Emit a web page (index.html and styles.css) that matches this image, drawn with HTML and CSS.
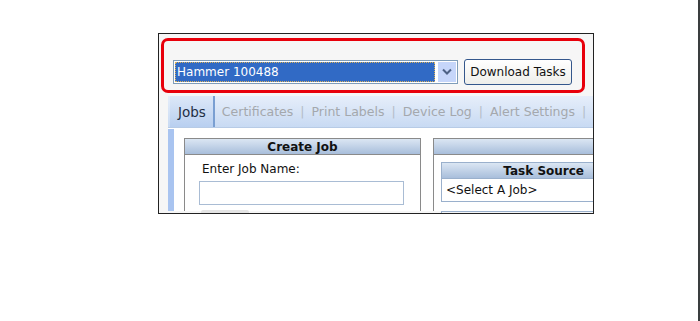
FILE: index.html
```html
<!DOCTYPE html>
<html lang="en">
<head>
    <meta charset="UTF-8">
    <title>Download Tasks</title>
    <link rel="stylesheet" href="styles.css">
</head>
<body>
    <div class="page">
        <div class="shot">
            <div class="top">
                <div class="highlight">
                    <div class="select">
                        <span class="select-value">Hammer 100488</span>
                        <span class="select-arrow">
                            <svg width="10" height="7" viewBox="0 0 10 7"><path d="M1 1.5 L5 5.5 L9 1.5" fill="none" stroke="#4d6185" stroke-width="2"/></svg>
                        </span>
                    </div>
                    <button class="btn">Download Tasks</button>
                </div>
            </div>

            <div class="tabframe">
                <nav class="tabs">
                    <span class="tab active">Jobs</span>
                    <span class="tab">Certificates</span>
                    <span class="sep">|</span>
                    <span class="tab">Print Labels</span>
                    <span class="sep">|</span>
                    <span class="tab">Device Log</span>
                    <span class="sep">|</span>
                    <span class="tab">Alert Settings</span>
                    <span class="sep">|</span>
                </nav>
                <div class="tabbody">
                    <div class="panel create">
                        <div class="panel-head">Create Job</div>
                        <div class="panel-body">
                            <div class="label">Enter Job Name:</div>
                            <div class="input"></div>
                            <div class="small-btn"></div>
                        </div>
                    </div>
                    <div class="panel tasks">
                        <div class="panel-head"></div>
                        <div class="panel-body">
                            <div class="source">
                                <div class="panel-head source-head">Task Source</div>
                                <div class="source-row">&lt;Select A Job&gt;</div>
                            </div>
                            <div class="source-next"></div>
                        </div>
                    </div>
                </div>
            </div>
        </div>
    </div>
</body>
</html>
```

FILE: styles.css
```css
body, html {
    margin: 0;
    padding: 0;
    background: #ffffff;
    font-family: "DejaVu Sans", Verdana, sans-serif;
}

.page {
    box-sizing: border-box;
    width: 700px;
    height: 321px;
    border-right: 2px solid #3a3d3f;
    padding: 33px 0 0 158px;
}

.shot {
    box-sizing: border-box;
    width: 436px;
    height: 181px;
    border: 1px solid #222;
    background: #f6f6f6;
    overflow: hidden;
}

.top {
    padding: 4px 0 0 2px;
    height: 58px;
}

.highlight {
    box-sizing: border-box;
    width: 424px;
    height: 55px;
    border: 3px solid #e8000b;
    border-radius: 7px;
    display: flex;
    align-items: center;
    gap: 6px;
    padding: 12px 0 0 9px;
}

.select {
    box-sizing: border-box;
    width: 285px;
    height: 24px;
    border: 1px solid #7f9db9;
    background: #fff;
    display: flex;
    align-items: center;
    padding: 1px;
    gap: 3px;
}

.select-value {
    flex: 1;
    height: 20px;
    background: #316ac5;
    color: #fff;
    font-size: 12px;
    line-height: 20px;
    padding-left: 2px;
    outline: 1px dotted #d9b25c;
    outline-offset: -1px;
}

.select-arrow {
    width: 18px;
    height: 20px;
    background: #c6d6fa;
    display: flex;
    align-items: center;
    justify-content: center;
}

.btn {
    box-sizing: border-box;
    width: 108px;
    height: 26px;
    border: 1px solid #34578c;
    border-radius: 3px;
    background: linear-gradient(#ffffff, #eeeeea);
    font-family: "DejaVu Sans", Verdana, sans-serif;
    font-size: 12px;
    color: #111;
    padding: 0;
}

.tabframe {
    margin-left: 9px;
    background: #dbe7f7;
}

.tabs {
    height: 31px;
    display: flex;
    align-items: center;
    background: linear-gradient(#e6eefa, #c8daf3);
    font-size: 12.5px;
    color: #a4a8ad;
    border-bottom: 1px solid #b7cbe6;
}

.tab {
    padding: 0 7px;
    white-space: nowrap;
}

.tab.active {
    align-self: stretch;
    display: flex;
    align-items: center;
    margin-left: 2px;
    padding: 0 7px 0 8px;
    font-size: 13.5px;
    color: #1e2f45;
    background: linear-gradient(#dde8f8, #b8cff0);
    border-right: 2px solid #7a9fd2;
}

.sep {
    color: #b4bcc7;
}

.tabbody {
    display: flex;
    gap: 12px;
    padding: 0 0 0 7px;
    height: 82px;
    background: linear-gradient(90deg, #a9c4f0 0, #a9c4f0 6px, #ffffff 6px);
    border-top: 1px solid #fff;
}

.panel {
    box-sizing: border-box;
    border: 1px solid #8a8a8a;
    border-bottom: none;
    background: #fff;
    margin-top: 9px;
}

.create {
    flex-shrink: 0;
    width: 237px;
    margin-left: 9px;
}

.tasks {
    flex: 1;
    min-width: 170px;
    border-right: none;
}

.panel-head {
    height: 15px;
    background: linear-gradient(#dbe6f3, #a8bedb);
    border-bottom: 1px solid #8a8a8a;
    font-size: 12px;
    font-weight: bold;
    line-height: 16px;
    text-align: center;
    color: #111;
}

.panel-body {
    padding: 7px 0 0 14px;
    font-size: 12px;
    color: #111;
}

.label {
    padding-left: 3px;
    height: 19px;
}

.input {
    width: 203px;
    height: 22px;
    border: 1px solid #a9bcd4;
}

.small-btn {
    margin-top: 5px;
    margin-left: 2px;
    width: 48px;
    height: 10px;
    background: #e4e4e4;
    border-radius: 2px;
}

.tasks .panel-body {
    padding: 7px 0 0 7px;
}

.source {
    border: 1px solid #9ab0cc;
    border-right: none;
}

.source-head {
    height: 15px;
    text-align: right;
    padding-right: 19px;
    border-color: #9ab0cc;
}

.source-row {
    height: 22px;
    line-height: 22px;
    padding-left: 4px;
}

.source-next {
    margin-top: 9px;
    height: 8px;
    border: 1px solid #9ab0cc;
    border-right: none;
    border-bottom: none;
    background: #f4f6f9;
}
```
